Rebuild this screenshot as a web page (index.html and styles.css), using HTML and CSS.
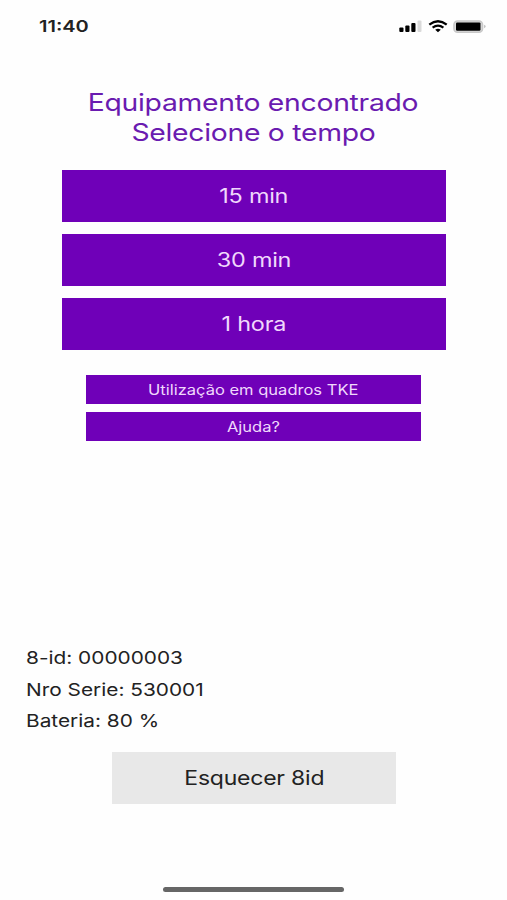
FILE: index.html
```
<!DOCTYPE html>
<html lang="pt">
  <head>
    <meta charset="UTF-8">
    <meta name="viewport" content="width=device-width, initial-scale=1">
    <title>8-id</title>
    <link rel="stylesheet" href="styles.css">
  </head>
  <body>
    <header class="status-bar">
      <span class="time wide">11:40</span>
      <div class="status-icons">
        <svg class="signal" width="24" height="13" viewBox="0 0 24 13">
          <rect x="0.3" y="7.5" width="4.2" height="4.5" rx="1" fill="#000"/>
          <rect x="6.3" y="5.5" width="4.2" height="6.5" rx="1" fill="#000"/>
          <rect x="12.3" y="3" width="4.2" height="9" rx="1" fill="#000"/>
          <rect x="18.5" y="0.5" width="4" height="11.5" rx="1" fill="#dadada"/>
        </svg>
        <svg class="wifi" width="20" height="13" viewBox="0 0 20 13">
          <path d="M1.3 4.6Q10 -2.2 18.7 4.6" fill="none" stroke="#000" stroke-width="2.3"/>
          <path d="M4.6 7.7Q10 3.5 15.4 7.7" fill="none" stroke="#000" stroke-width="2.1"/>
          <path d="M7.2 9.7Q10 7.7 12.8 9.7L10 12.2Z" fill="#000"/>
        </svg>
        <svg class="battery" width="35" height="13" viewBox="0 0 35 13">
          <rect x="1" y="1" width="28.5" height="11.2" rx="3.5" fill="#ddd" stroke="#c8c8c8" stroke-width="1.6"/>
          <rect x="3" y="2.4" width="24.5" height="8.4" rx="1.2" fill="#000"/>
          <path d="M31.3 4.8Q33.8 6.5 31.3 8.2Z" fill="#aaa"/>
        </svg>
      </div>
    </header>

    <main>
      <h1>
        <span class="wide">Equipamento encontrado</span>
        <span class="wide">Selecione o tempo</span>
      </h1>

      <div class="times">
        <button class="btn"><span class="wide">15 min</span></button>
        <button class="btn"><span class="wide">30 min</span></button>
        <button class="btn"><span class="wide">1 hora</span></button>
      </div>

      <div class="links">
        <button class="btn btn-small"><span class="wide">Utilização em quadros TKE</span></button>
        <button class="btn btn-small"><span class="wide">Ajuda?</span></button>
      </div>
    </main>

    <footer>
      <ul class="info">
        <li class="wide">8-id: 00000003</li>
        <li class="wide">Nro Serie: 530001</li>
        <li class="wide">Bateria: 80 %</li>
      </ul>
      <button class="btn btn-forget"><span class="wide">Esquecer 8id</span></button>
      <div class="home-bar"></div>
    </footer>
  </body>
</html>
```

FILE: styles.css
```
*{
  box-sizing: border-box;
}
html, body{
  margin: 0;
  padding: 0;
  height: 100%;
}
body{
  display: flex;
  flex-direction: column;
  background: #fefefe;
  color: #222;
  font-family: "Inter", "Liberation Sans", sans-serif;
  overflow: hidden;
}
/* extended letterforms */
.wide{
  display: block;
  width: fit-content;
  white-space: nowrap;
  letter-spacing: -0.01em;
  transform: scaleX(1.18);
}

.status-bar{
  display: flex;
  justify-content: space-between;
  align-items: center;
  height: 52px;
  padding: 0 19px 0 39px;
}
.time{
  font-size: 16px;
  font-weight: 600;
  letter-spacing: 0;
  transform: scaleX(1.25);
  transform-origin: 0 50%;
}
.status-icons{
  display: flex;
  align-items: center;
}
.status-icons svg{
  display: block;
}
.wifi{
  margin: 0 5px 0 5px;
}

h1{
  margin: 36px 0 0;
  color: #6a1bb0;
  font-size: 24px;
  font-weight: 400;
  line-height: 29.5px;
}
h1 .wide{
  margin: 0 auto;
}
.times{
  display: flex;
  flex-direction: column;
  gap: 12px;
  width: 384px;
  margin: 22.5px 0 0 62px;
}
.times .wide{
  transform: scaleX(1.2);
}
.links{
  display: flex;
  flex-direction: column;
  gap: 8px;
  width: 335px;
  margin: 25px 0 0 86px;
}
.btn{
  display: flex;
  align-items: center;
  justify-content: center;
  height: 52.2px;
  padding: 0;
  border: 0;
  background: #6f00b8;
  color: #f0d8fc;
  font-family: inherit;
  font-size: 19.5px;
}
.btn-small{
  height: 29px;
  font-size: 14px;
}
.btn-small .wide{
  letter-spacing: 0;
}

footer{
  margin-top: auto;
}
.info{
  margin: 0 0 15px;
  padding: 0 0 0 26px;
  list-style: none;
  font-size: 17.5px;
  line-height: 31.5px;
}
.info li{
  letter-spacing: 0;
  transform: scaleX(1.19);
  transform-origin: 0 50%;
}
.btn-forget{
  width: 284px;
  margin-left: 112px;
  background: #e8e8e8;
  color: #222;
}
.home-bar{
  width: 181px;
  height: 5px;
  margin: 83px 0 8px 163px;
  border-radius: 3px;
  background: #666;
}
```
